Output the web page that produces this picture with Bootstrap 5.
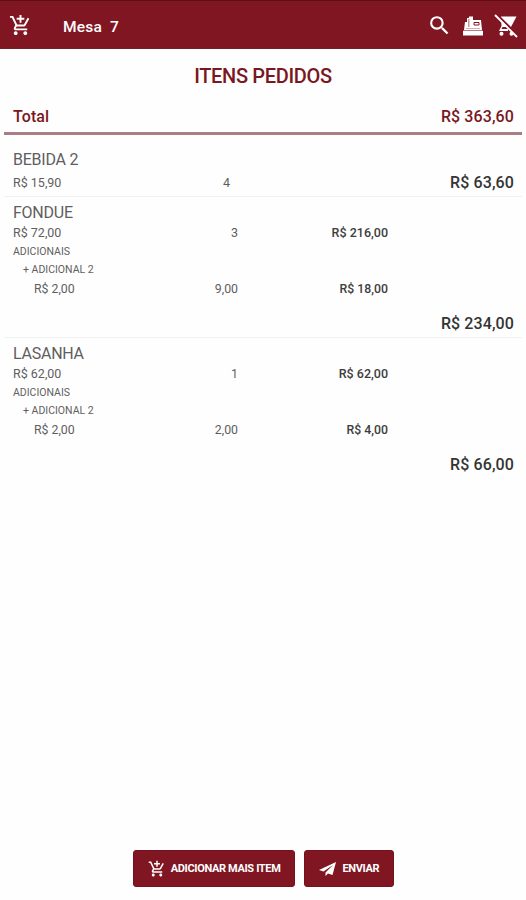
<!DOCTYPE html>
<html lang="pt-BR">
<head>
<meta charset="utf-8">
<meta name="viewport" content="width=device-width, initial-scale=1">
<title>Mesa 7</title>
<link href="https://cdn.jsdelivr.net/npm/bootstrap@5.3.0/dist/css/bootstrap.min.css" rel="stylesheet">
<style>
body{font-family:Roboto,"Liberation Sans",sans-serif;background:#fefefe;color:#5e5e5e;height:900px;overflow:hidden}
.topbar{height:49px;background:#811623;border-top:1px solid #5c0d16;border-bottom:1px solid #74202a;color:#fff;padding:2px 9px 0}
.table-name{font-size:15.5px;font-weight:500;letter-spacing:.2px;word-spacing:4px;margin-left:31px;line-height:20px;padding-top:2px}
.tools{gap:10px;margin-right:-1px}
.wine{color:#791722}
.heading{font-size:20px;font-weight:500;line-height:24px;padding-top:15px;letter-spacing:-.33px}
.sum{height:47px;margin:0 4px;padding:11px 8px 0 9px;border-bottom:3px solid #aa7c84;font-size:16px;font-weight:500;line-height:36px;letter-spacing:.1px}
.order{margin:0 4px;padding:6px 8px 1px 9px;border-bottom:1px solid #f1f1f1}
.order.first{padding-top:15px;padding-bottom:0}
.order:last-child{border-bottom:0}
.dish{font-size:16px;line-height:20px;letter-spacing:-.25px}
.line{display:grid;grid-template-columns:125px 100px 150px 1fr;font-size:12.5px;line-height:20px}
.line.only{line-height:26px}
.line.extra{line-height:22px;font-size:12.3px}
.line .sub{color:#3d3d3d;font-weight:500}
.grand{font-size:16px;font-weight:500;color:#343434;letter-spacing:.1px}
.grand.below{line-height:24px;padding-top:12px}
.note{font-size:10.5px;line-height:18px}
.note.in{line-height:17px;padding-left:10px}
.extra span:first-child{padding-left:21px}
.actions{gap:9px;padding-bottom:13px;margin-left:1px}
.btn-wine{--bs-btn-color:#fff;--bs-btn-bg:#811623;--bs-btn-border-color:#74111d;--bs-btn-hover-color:#fff;--bs-btn-hover-bg:#6d101b;height:37px;border-radius:3px;font-size:11px;font-weight:700;padding:2px 14px 0;letter-spacing:-.35px}
.btn-wine svg{margin:-2px 5px 0 0}
</style>
<script src="https://cdn.jsdelivr.net/npm/bootstrap@5.3.0/dist/js/bootstrap.bundle.min.js"></script>
</head>
<body class="d-flex flex-column">
<svg class="d-none">
<symbol id="cart-add" viewBox="0 0 24 24"><path fill="currentColor" d="M11 9h2V6h3V4h-3V1h-2v3H8v2h3v3zm-4 9c-1.100 0-1.990.9-1.990 2S5.900 22 7 22s2-.9 2-2-.9-2-2-2zm10 0c-1.100 0-1.990.9-1.990 2s.89 2 1.990 2 2-.9 2-2-.9-2-2-2zm-9.830-3.250.03-.12.900-1.630h7.450c.75 0 1.410-.41 1.750-1.030l3.860-7.010L19.420 4h-.01l-1.100 2-2.760 5H8.530l-.13-.27L6.160 6l-.95-2-.94-2H1v2h2l3.600 7.590-1.350 2.450c-.16.280-.25.610-.25.960 0 1.100.9 2 2 2h12v-2H7.420c-.13 0-.25-.11-.25-.25z"/></symbol>
</svg>
<header class="topbar d-flex align-items-center flex-shrink-0">
<svg width="23" height="25"><use href="#cart-add"/></svg>
<div class="table-name">Mesa 7</div>
<div class="tools d-flex align-items-center ms-auto">
<svg width="25" height="25" viewBox="0 0 24 24"><path fill="currentColor" d="M15.500 14h-.79l-.28-.27A6.470 6.470 0 0 0 16 9.500 6.500 6.500 0 1 0 9.500 16c1.610 0 3.090-.59 4.230-1.570l.27.280v.79l5 4.990L20.490 19l-4.990-5zm-6 0a4.500 4.500 0 1 1 0-9 4.500 4.500 0 0 1 0 9z"/></svg>
<svg width="22" height="22" viewBox="0 0 22 22"><path fill="#fff" d="M3 7h2V3h2V1.500h4V5h8l1 10H2z"/><path fill="#fff" d="M1 16h20v4.500H1z"/><path fill="#c9949b" d="M6 4h1.500v8H6z"/><path stroke="#811623" d="M12 7.500h5v2.500h-5z" fill="none"/><path stroke="#c9949b" stroke-width=".8" d="M4 13.500h14M1.500 15.500h19"/></svg>
<svg width="24" height="24" viewBox="0 0 24 24"><path fill="currentColor" d="M7 2.500h15.500L17 13H8.500l-1 2H14v2H5l2.500-5zM7.500 17.800a2 2 0 1 1 0 4 2 2 0 0 1 0-4zM17.500 17.800a2 2 0 1 1 0 4 2 2 0 0 1 0-4z"/><path stroke="#811623" stroke-width="2" d="M2.500 0 24 21.500"/><path stroke="#fff" stroke-width="1.900" d="m1 1 22 22"/></svg>
</div>
</header>
<main class="flex-grow-1">
<h1 class="heading wine text-center mb-0">ITENS PEDIDOS</h1>
<div class="sum wine d-flex justify-content-between"><span>Total</span><span>R$ 363,60</span></div>
<div>
<section class="order first">
<div class="dish">BEBIDA 2</div>
<div class="line only"><span>R$ 15,90</span><span class="text-end pe-2">4</span><span></span><span class="grand text-end">R$ 63,60</span></div>
</section>
<section class="order">
<div class="dish">FONDUE</div>
<div class="line"><span>R$ 72,00</span><span class="text-end">3</span><span class="sub text-end">R$ 216,00</span></div>
<div class="note">ADICIONAIS</div>
<div class="note in">+ ADICIONAL 2</div>
<div class="line extra"><span>R$ 2,00</span><span class="text-end">9,00</span><span class="sub text-end">R$ 18,00</span></div>
<div class="grand below text-end">R$ 234,00</div>
</section>
<section class="order">
<div class="dish">LASANHA</div>
<div class="line"><span>R$ 62,00</span><span class="text-end">1</span><span class="sub text-end">R$ 62,00</span></div>
<div class="note">ADICIONAIS</div>
<div class="note in">+ ADICIONAL 2</div>
<div class="line extra"><span>R$ 2,00</span><span class="text-end">2,00</span><span class="sub text-end">R$ 4,00</span></div>
<div class="grand below text-end">R$ 66,00</div>
</section>
</div>
</main>
<footer class="actions d-flex justify-content-center">
<button type="button" class="btn btn-wine d-flex align-items-center"><svg width="18" height="18"><use href="#cart-add"/></svg>ADICIONAR MAIS ITEM</button>
<button type="button" class="btn btn-wine d-flex align-items-center"><svg width="18" height="16" viewBox="0 0 18 16"><path fill="currentColor" d="M17 1 0 9l4.500 1.600L14 4 6.500 11.500V15l2.500-2.500 4.500 1.500z"/></svg>ENVIAR</button>
</footer>
</body>
</html>
